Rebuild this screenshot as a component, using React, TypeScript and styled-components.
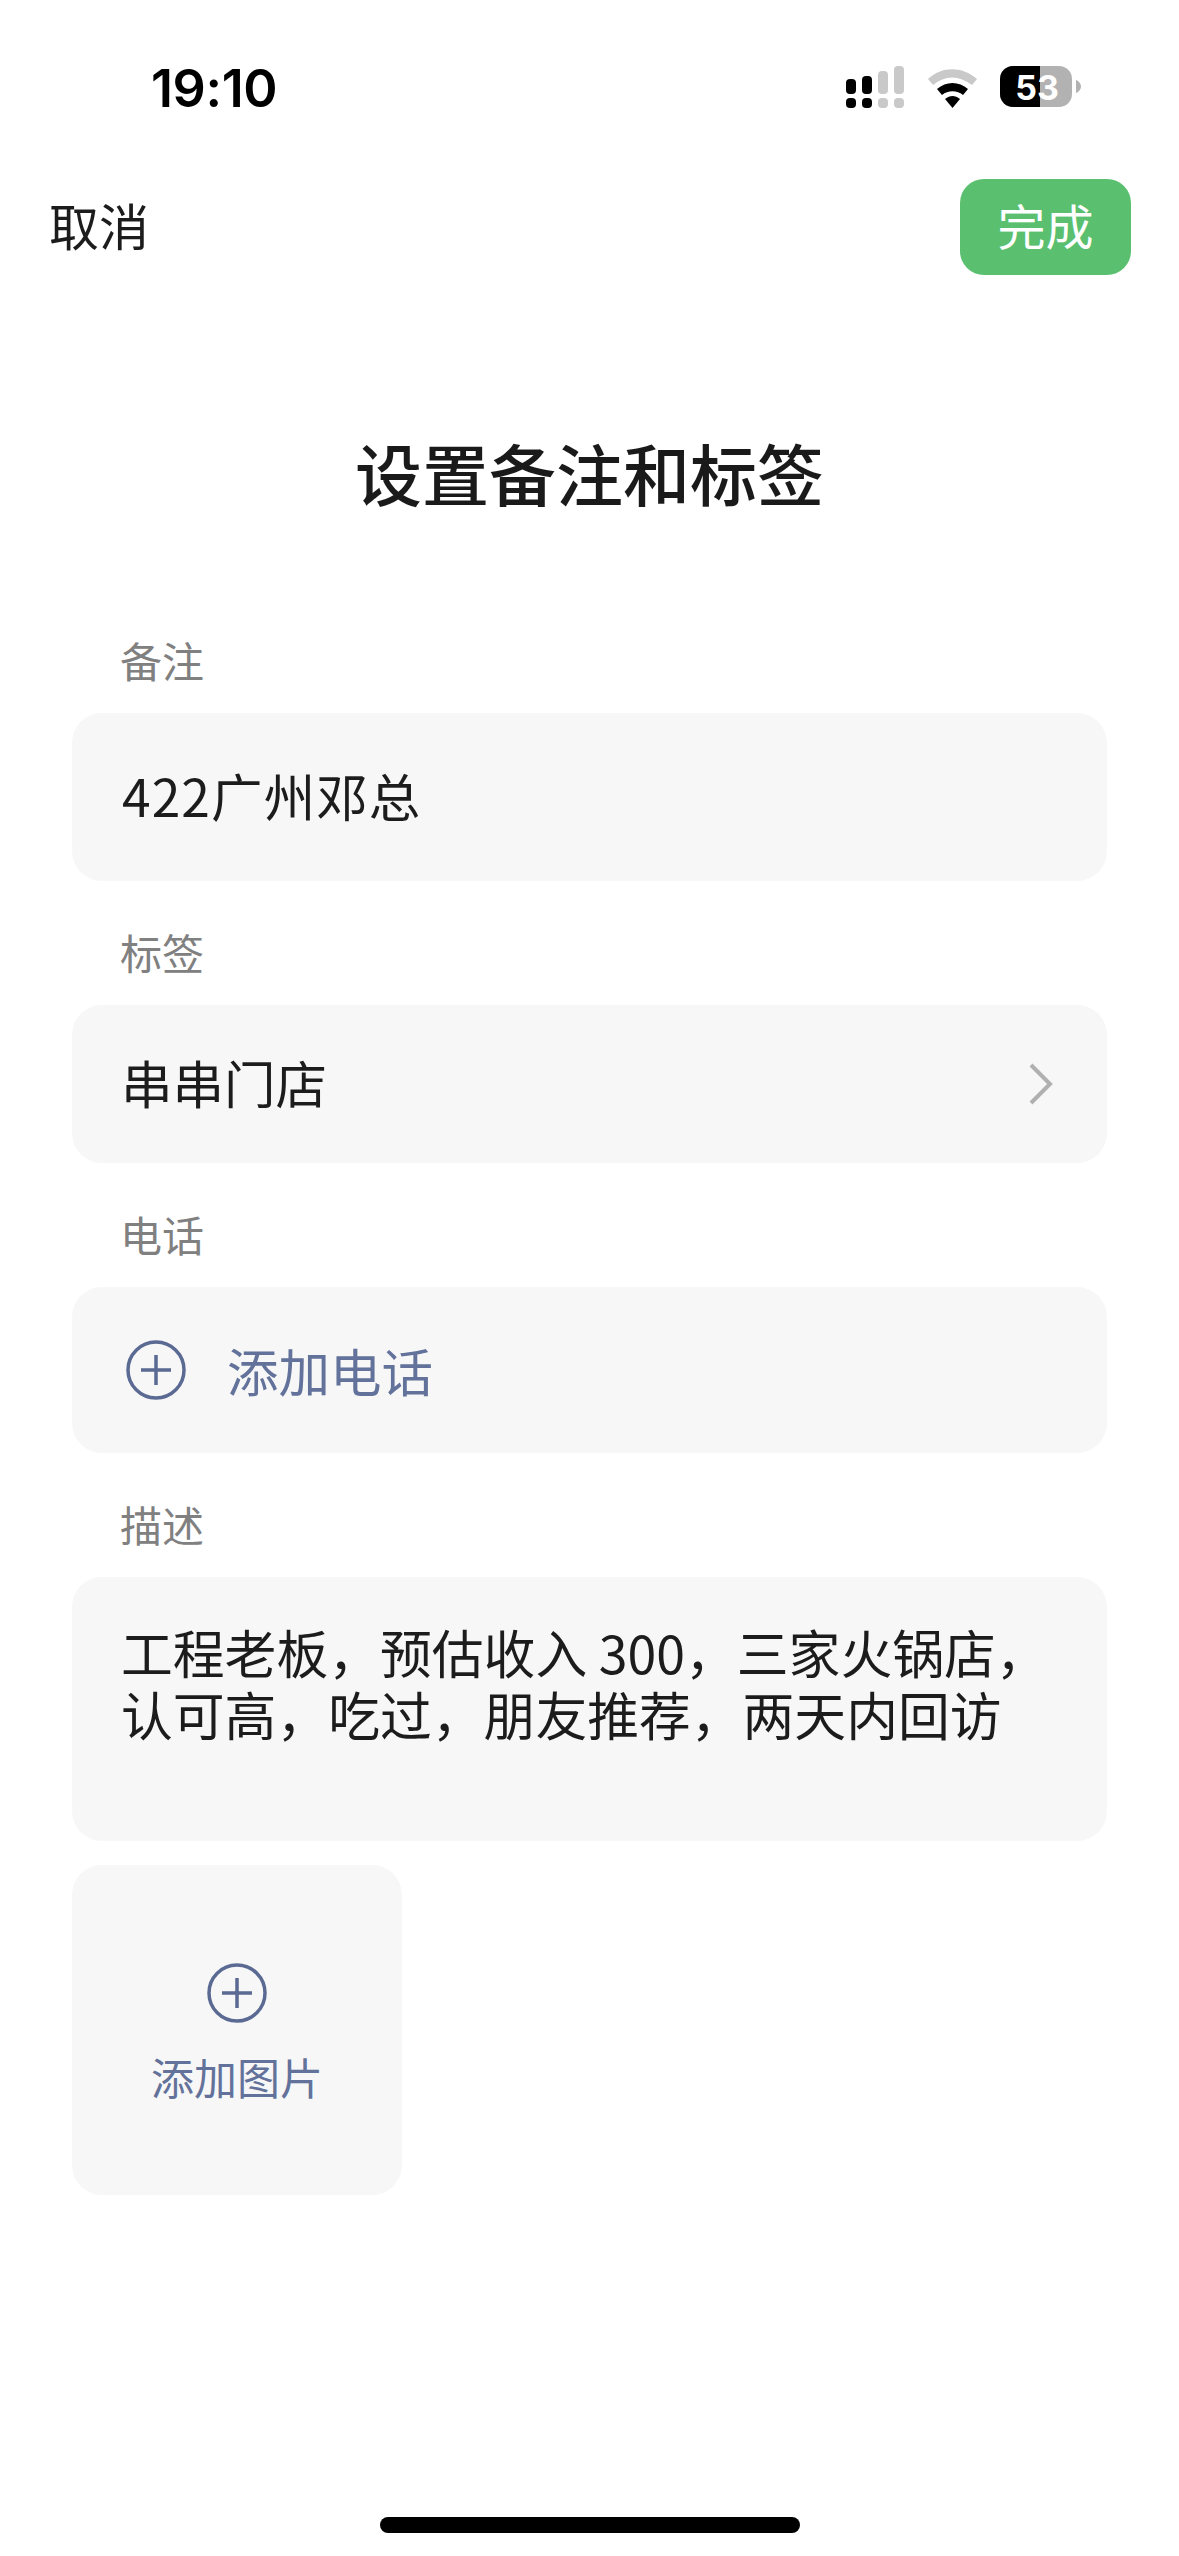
import React from "react";
import styled, { createGlobalStyle } from "styled-components";

const Global = createGlobalStyle`
  html, body { margin: 0; padding: 0; background: #fff; }
  * { box-sizing: border-box; }
`;
const cjk = `"Noto Sans CJK SC", "Noto Sans", sans-serif`;
const Page = styled.div`
  width: 1179px; height: 2556px; display: flex; flex-direction: column;
  font-family: ${cjk}; color: #1c1c1c; background: #fff; overflow: hidden;
`;
const StatusBar = styled.div`
  height: 179px; padding: 0 0 3px 151px; display: flex; align-items: center; justify-content: space-between;
`;
const Clock = styled.span`
  font-family: "Inter", "Liberation Sans", sans-serif; font-size: 52px; font-weight: 600; color: #000; letter-spacing: -0.4px;
`;
const StatusIcons = styled.svg`
  width: 246px; height: 50px; margin-right: 87px; flex: none;
`;
const Header = styled.div`
  height: 96px; padding: 0 48px 0 49px; display: flex; align-items: center; justify-content: space-between;
`;
const Cancel = styled.span`
  font-size: 50px; font-weight: 400; color: #1c1c1c; line-height: 1; margin-bottom: 6px;
`;
const Done = styled.span`
  width: 171px; height: 96px; border-radius: 24px; background: #5ac06f; color: #fff; padding: 0 0 6px 0;
  font-size: 48px; display: flex; align-items: center; justify-content: center;
`;
const Title = styled.h1`
  margin: 149px 0 113px; height: 96px; line-height: 96px; text-align: center; font-size: 67px; font-weight: 500; color: #1a1a1a;
`;
const Form = styled.div`
  padding: 0 72px; display: flex; flex-direction: column; gap: 44px;
`;
const Field = styled.section`
  display: flex; flex-direction: column; gap: 20px;
`;
const Label = styled.div`
  height: 60px; line-height: 54px; padding-left: 48px; font-size: 42px; font-weight: 400; color: #808080;
`;
const Card = styled.div<{ $h: number }>`
  height: ${(p) => p.$h}px; border-radius: 30px; background: #f7f7f7; padding: 0 50px 0 49px; display: flex; align-items: center; justify-content: space-between;
  font-size: 51.5px; color: #1c1c1c;
`;
const CardText = styled.span`
  margin-bottom: 6px;
`;
const Nickname = styled(CardText)`
  letter-spacing: 1.1px; margin-left: 1px;
`;
const AddRow = styled(Card)`
  justify-content: flex-start; gap: 41px; padding-left: 54px; color: #63729a;
`;
const AddRowText = styled.span`
  margin-bottom: 2px;
`;
const Description = styled.div`
  height: 264px; border-radius: 30px; background: #f7f7f7; padding: 44px 0 0 49px; font-size: 51.8px; line-height: 62px; white-space: nowrap; color: #1c1c1c; margin-bottom: 24px;
`;
const AddImage = styled.div`
  width: 330px; height: 330px; border-radius: 30px; background: #f7f7f7; margin-top: -20px; display: flex; flex-direction: column; align-items: center; padding-top: 98px; gap: 23px;
  color: #63729a; font-size: 43px; line-height: 60px;
`;
const Indicator = styled.div`
  width: 420px; height: 16px; border-radius: 8px; background: #000; margin: auto auto 23px;
`;

const PlusCircle = () => (
  <svg width="60" height="60" viewBox="0 0 60 60" fill="none" stroke="#5b6a92" strokeWidth="3.5" style={{ flex: "none" }}>
    <circle cx="30" cy="30" r="28" />
    <path d="M30 15v30M15 30h30" />
  </svg>
);

export default function App() {
  return (
    <Page>
      <Global />
      <StatusBar>
        <Clock>19:10</Clock>
        <StatusIcons viewBox="-6 0 246 50">
          <g fill="#000">
            <rect x="-6" y="16" width="10" height="15" rx="4" />
            <rect x="10" y="13" width="10" height="18" rx="4" />
            <rect x="-6" y="35" width="10" height="10" rx="4" />
            <rect x="10" y="35" width="10" height="10" rx="4" />
          </g>
          <g fill="#c9c9c9">
            <rect x="26" y="8" width="10" height="23" rx="4" />
            <rect x="42" y="3" width="10" height="28" rx="4" />
            <rect x="26" y="35" width="10" height="10" rx="4" />
            <rect x="42" y="35" width="10" height="10" rx="4" />
          </g>
          <path d="M76 16C90 3 110 3 125 16l-5 6C107 12 93 12 81 22z" fill="#c9c9c9" />
          <path d="M85 26c9-8 22-8 31 0l-5 6c-6-5-15-5-21 0z" fill="#000" />
          <path d="M93 36c5-4 10-4 15 0l-7.500 9z" fill="#000" />
          <rect x="148" y="3" width="72" height="41" rx="13" fill="#b2b2b2" />
          <path d="M188 3h-27a13 13 0 0 0-13 13v15a13 13 0 0 0 13 13h27z" fill="#000" />
          <path d="M224 17c3 1 5 4 5 6.500s-2 5.500-5 6.500z" fill="#b2b2b2" />
          <text x="185" y="37" textAnchor="middle" fontFamily="Inter, sans-serif" fontWeight="700" fontSize="34" fill="#fff">53</text>
        </StatusIcons>
      </StatusBar>
      <Header>
        <Cancel>取消</Cancel>
        <Done>完成</Done>
      </Header>
      <Title>设置备注和标签</Title>
      <Form>
        <Field>
          <Label>备注</Label>
          <Card $h={168}><Nickname>422广州邓总</Nickname></Card>
        </Field>
        <Field>
          <Label>标签</Label>
          <Card $h={158}>
            <CardText>串串门店</CardText>
            <svg width="26" height="44" viewBox="0 0 26 44" fill="none" stroke="#b0b0b0" strokeWidth="4" style={{ marginRight: 3 }}>
              <path d="M3 3l19 19L3 41" />
            </svg>
          </Card>
        </Field>
        <Field>
          <Label>电话</Label>
          <AddRow $h={166}>
            <PlusCircle />
            <AddRowText>添加电话</AddRowText>
          </AddRow>
        </Field>
        <Field>
          <Label>描述</Label>
          <Description>
            工程老板，预估收入 300，三家火锅店，
            <br />
            认可高，吃过，朋友推荐，两天内回访
          </Description>
          <AddImage>
            <PlusCircle />
            <span>添加图片</span>
          </AddImage>
        </Field>
      </Form>
      <Indicator />
    </Page>
  );
}
